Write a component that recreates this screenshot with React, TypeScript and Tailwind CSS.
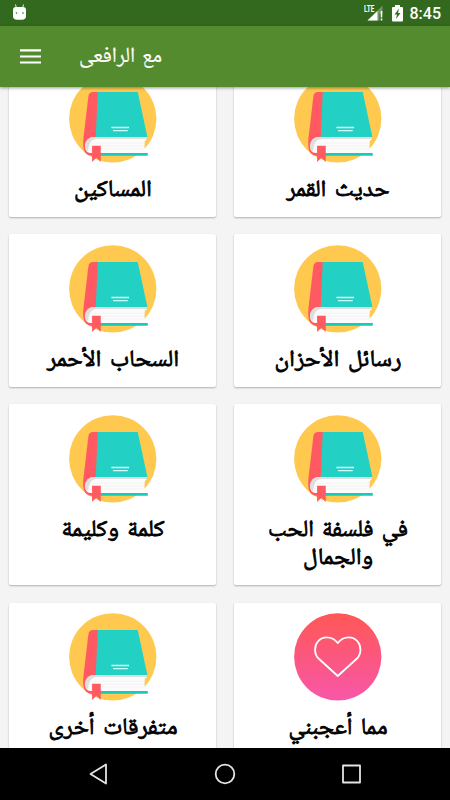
type CardItem = {
  title: string[];
  icon: 'book' | 'heart';
  // rendered width of each title line
  widths: number[];
};

const cards: CardItem[] = [
  { title: ['المساكين'], icon: 'book', widths: [78] },
  { title: ['حديث القمر'], icon: 'book', widths: [103] },
  { title: ['السحاب الأحمر'], icon: 'book', widths: [132] },
  { title: ['رسائل الأحزان'], icon: 'book', widths: [127] },
  { title: ['كلمة وكليمة'], icon: 'book', widths: [103] },
  { title: ['في فلسفة الحب', 'والجمال'], icon: 'book', widths: [140, 70] },
  { title: ['متفرقات أخرى'], icon: 'book', widths: [129] },
  { title: ['مما أعجبني'], icon: 'heart', widths: [99] },
];

function BookIcon() {
  return (
    <svg viewBox="0 0 262 264" className="h-[88px] w-[87.5px] shrink-0 overflow-visible">
      <circle cx="131" cy="131.5" r="131" fill="#ffc950" />
      <path d="M90 51H72Q60 51 58 63L43 190Q38 241 65 242H95V185Z" fill="#ff5a62" />
      <path d="M86 51H206L235 186H80Z" fill="#22d1c4" />
      <path d="M74 186H233V192L227 199L226 220L236 226V234H64Q48 233 48 212Q50 188 74 186Z" fill="#fbfbfb" />
      <path d="M74 186H233V192H80Q58 194 57 229Q48 224 48 210Q51 188 74 186Z" fill="#dededf" />
      <path d="M66 205H226M62 214H226M62 222H227" stroke="#f3f3f4" strokeWidth="2" fill="none" />
      <path d="M95 234H236V242H95Z" fill="#16cbbb" />
      <path d="M69 212H95V261L82 248L69 261Z" fill="#ff5a62" />
      <path d="M127 157.500H180M132 167H176" stroke="#d5fffa" strokeWidth="3.800" />
    </svg>
  );
}

function HeartIcon() {
  return (
    <svg viewBox="0 0 262 264" className="h-[88px] w-[87.5px] shrink-0 overflow-visible">
      <defs>
        <linearGradient id="heart-fill" x1="0" y1="0" x2="0" y2="1">
          <stop offset="0" stopColor="#ff5756" />
          <stop offset="1" stopColor="#f857a9" />
        </linearGradient>
      </defs>
      <circle cx="131" cy="131.500" r="131" fill="url(#heart-fill)" />
      <path
        d="M131 90C121 77 111 73 98 73C77 73 63 90 63 110C63 122 67 131 75 138L131 189L187 138C195 131 199 122 199 110C199 90 185 73 164 73C151 73 141 77 131 90Z"
        fill="none"
        stroke="#fff"
        strokeWidth="5.500"
        strokeLinejoin="round"
      />
    </svg>
  );
}

function Card({ title, icon, widths }: CardItem) {
  return (
    <article className="flex flex-col items-center rounded-[2px] bg-white pt-[10.5px] shadow-[0_1px_2px_rgba(0,0,0,0.28)]">
      {icon === 'book' ? <BookIcon /> : <HeartIcon />}
      <h2 className="mt-[12px] flex flex-col items-center">
        {title.map((line, i) => (
          <svg key={line} width="200" height="28" className="block overflow-visible">
            <text
              x="100"
              y="21"
              direction="rtl"
              textAnchor="middle"
              textLength={widths[i]}
              lengthAdjust="spacingAndGlyphs"
              className="fill-black stroke-black stroke-[0.8px] font-['Noto_Naskh_Arabic','DejaVu_Sans',sans-serif] text-[23px] [word-spacing:3px]"
            >
              {line}
            </text>
          </svg>
        ))}
      </h2>
    </article>
  );
}

function StatusBar() {
  return (
    <div className="flex h-[26px] shrink-0 items-center justify-between bg-[#33691e] pr-[9px] pl-[12px]">
      <svg width="16" height="18" viewBox="0 0 16 18">
        <path d="M3.500 0.500L4.500 4.500M11.500 0.500L10.500 4.500" stroke="#e8f2e3" strokeWidth="1" />
        <path d="M1 6Q1 3 4 3H11Q14 3 14 6V12Q14 15.800 10 15.800H5Q1 15.800 1 12Z" fill="#fff" />
        <circle cx="4.500" cy="9" r="0.800" fill="#33691e" />
        <circle cx="11" cy="9" r="0.800" fill="#33691e" />
      </svg>
      <div className="flex items-center text-white">
        <svg width="20" height="18" viewBox="0 0 20 18">
          <path d="M18.500 1.500V10H15.500V16.500H3.500Z" fill="#fff" opacity=".3" />
          <path d="M13.500 7V16.500H3.500Z" fill="#fff" />
          <path d="M17.500 7V13.500M17.500 14.500V16.500" stroke="#fff" strokeWidth="1.600" />
          <text x="0" y="8" textLength="10.500" lengthAdjust="spacingAndGlyphs" className="fill-white font-[Roboto,sans-serif] text-[9.5px] font-bold">
            LTE
          </text>
        </svg>
        <svg width="11" height="17" viewBox="0 0 11 17" className="ml-[8px]">
          <path d="M3 0H8V2H10Q11 2 11 3V15.500Q11 16.500 10 16.500H1Q0 16.500 0 15.500V3Q0 2 1 2H3Z" fill="#fff" />
          <path d="M7 3.500L2.500 9.500H5L4 14L8.500 8H6Z" fill="#33691e" />
        </svg>
        <span className="mt-[2px] ml-[7px] font-[Roboto,sans-serif] text-[16px] leading-none font-medium">8:45</span>
      </div>
    </div>
  );
}

function AppBar() {
  return (
    <header className="relative z-10 flex h-[61px] shrink-0 items-center bg-[#558b2f] pl-[20px] shadow-[0_1px_3px_rgba(0,0,0,0.4)]">
      <button type="button" aria-label="القائمة">
        <svg width="21" height="15" viewBox="0 0 21 15" className="block" fill="#fff">
          <path d="M0 0.300H21V2.500H0ZM0 6.400H21V8.600H0ZM0 12.400H21V14.600H0Z" />
        </svg>
      </button>
      <svg width="84" height="32" className="ml-[38px] overflow-visible">
        <text
          x="41.500"
          y="20.500"
          direction="rtl"
          textAnchor="middle"
          textLength="83"
          lengthAdjust="spacingAndGlyphs"
          className="fill-white stroke-white stroke-[0.2px] font-['Noto_Naskh_Arabic','DejaVu_Sans',sans-serif] text-[21.5px] [word-spacing:2px]"
        >
          مع الرافعى
        </text>
      </svg>
    </header>
  );
}

function NavBar() {
  return (
    <nav className="flex h-[52px] shrink-0 items-center justify-between bg-black pr-[79px] pl-[79px]">
      <svg width="40" height="30" viewBox="0 0 40 30" fill="none" stroke="#e4e4e4" strokeWidth="1.800" strokeLinejoin="round">
        <path d="M27 5.500V24.500L11.500 15Z" />
      </svg>
      <svg width="30" height="30" viewBox="0 0 30 30" fill="none" stroke="#e4e4e4" strokeWidth="1.800">
        <circle cx="15" cy="15" r="9.300" />
      </svg>
      <svg width="40" height="30" viewBox="0 0 40 30" fill="none" stroke="#e4e4e4" strokeWidth="1.800" strokeLinejoin="round">
        <rect x="12" y="6.500" width="17" height="17" />
      </svg>
    </nav>
  );
}

export default function App() {
  return (
    <div className="flex h-[800px] w-[450px] flex-col overflow-hidden bg-[#f4f4f4]">
      <StatusBar />
      <AppBar />
      <main className="min-h-0 flex-1 overflow-hidden">
        <div className="-mt-[23px] grid grid-cols-[207px_207px] grid-rows-[152.5px_152.5px_181px_181px] gap-x-[18px] gap-y-[17.5px] px-[9px]">
          {cards.map((card) => (
            <Card key={card.title[0]} {...card} />
          ))}
        </div>
      </main>
      <NavBar />
    </div>
  );
}
